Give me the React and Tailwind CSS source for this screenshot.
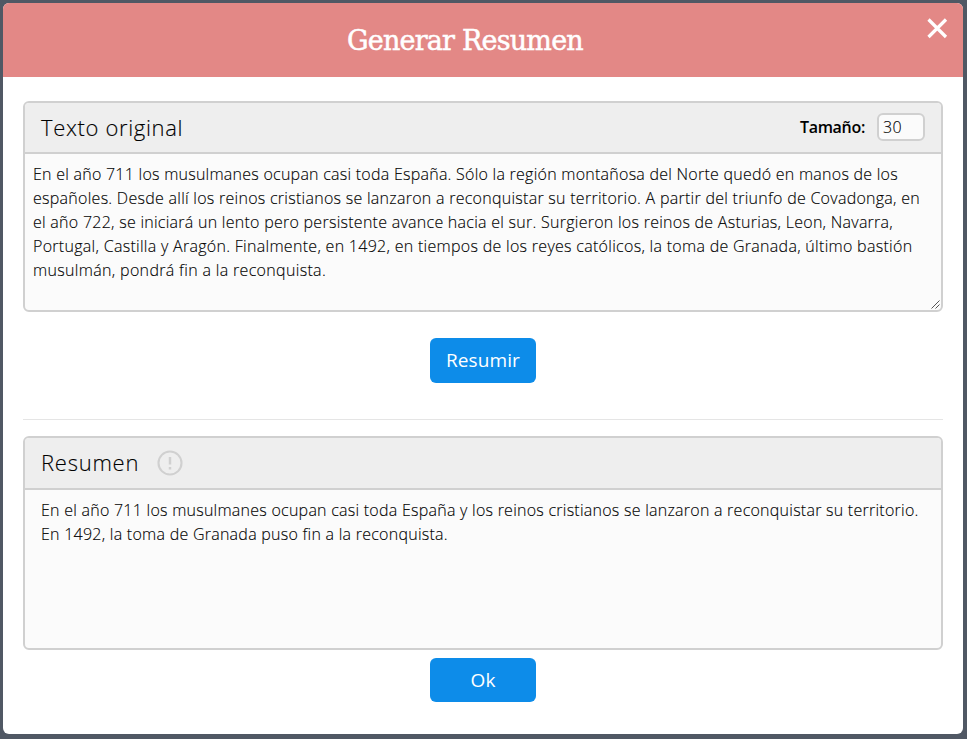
const original = [
  { text: 'En el año 711 los musulmanes ocupan casi toda España. Sólo la región montañosa del Norte quedó en manos de los', tracking: 'tracking-[0.25px]' },
  { text: 'españoles. Desde allí los reinos cristianos se lanzaron a reconquistar su territorio. A partir del triunfo de Covadonga, en', tracking: 'tracking-[0.27px]' },
  { text: 'el año 722, se iniciará un lento pero persistente avance hacia el sur. Surgieron los reinos de Asturias, Leon, Navarra,', tracking: 'tracking-[0.265px]' },
  { text: 'Portugal, Castilla y Aragón. Finalmente, en 1492, en tiempos de los reyes católicos, la toma de Granada, último bastión', tracking: 'tracking-[0.29px]' },
  { text: 'musulmán, pondrá fin a la reconquista.', tracking: 'tracking-[0.33px]' },
];

const summary = [
  { text: 'En el año 711 los musulmanes ocupan casi toda España y los reinos cristianos se lanzaron a reconquistar su territorio.', tracking: 'tracking-[0.25px]' },
  { text: 'En 1492, la toma de Granada puso fin a la reconquista.', tracking: 'tracking-[0.255px]' },
];

function Lines({ lines }) {
  return lines.map(({ text, tracking }) => (
    <div key={text} className={`whitespace-nowrap [-webkit-text-stroke:0.12px_black] ${tracking}`}>
      <span>{text}</span>
    </div>
  ));
}

export default function App() {
  return (
    <div className="h-[739px] w-[967px] overflow-hidden bg-[#505864] px-[3px] pt-[3px] font-['Open_Sans',sans-serif] text-black">
      <div className="flex h-[731px] w-[960px] flex-col overflow-hidden rounded-md bg-white">
        <header className="flex h-[74px] shrink-0 items-start justify-between bg-[#e38886]">
          <h1 className="ml-[344px] mt-[19px] whitespace-nowrap font-['Roboto_Slab','DejaVu_Serif',serif] text-[27px] leading-[38px] tracking-[-0.8px] text-white [-webkit-text-stroke:0.5px_white]">
            <span>Generar Resumen</span>
          </h1>
          <button className="mr-[15px] mt-[15px]" aria-label="Cerrar">
            <svg width="21" height="21" viewBox="0 0 21 21" fill="none" stroke="white" strokeWidth="3.2" strokeLinecap="butt">
              <path d="M1.5 1.5 19 19M19 1.5 1.5 19" />
            </svg>
          </button>
        </header>
        <main className="flex flex-col px-5 pt-6">
          <section className="flex h-[211px] w-[920px] flex-col overflow-hidden rounded-md border-2 border-[#d0d0d0] bg-[#fbfbfb]">
            <div className="flex h-[51px] shrink-0 items-center justify-between border-b-2 border-[#d0d0d0] bg-[#eeeeee] pl-4 pr-4">
              <h2 className="text-[22px] font-light tracking-[0.65px] text-black [-webkit-text-stroke:0.12px_black]"><span>Texto original</span></h2>
              <label className="-mt-0.5 flex items-center gap-3 text-base font-semibold tracking-[-0.3px] text-black">
                <span>Tamaño:</span>
                <span className="flex h-7 w-12 items-center rounded-md border-2 border-[#d0d0d0] bg-[#fbfbfb] pl-1 font-light tracking-[0.3px] [-webkit-text-stroke:0.12px_black]">30</span>
              </label>
            </div>
            <div className="flex-1 px-2 pt-2 text-base font-light leading-6">
              <Lines lines={original} />
            </div>
            <svg className="mb-px mr-px shrink-0 self-end" width="9" height="9" viewBox="0 0 9 9" stroke="#555" fill="none">
              <path d="M.5 8.5l8-8M4.5 8.5l4-4" />
            </svg>
          </section>
          <button className="mt-[26px] h-[45px] w-[106px] self-center rounded-md bg-[#0d8ce9] text-[19px] tracking-[0.1px] text-white"><span>Resumir</span></button>
          <hr className="mt-9 border-t border-[#e5e5e5]" />
          <section className="mt-4 flex h-[214px] w-[920px] flex-col overflow-hidden rounded-md border-2 border-[#d0d0d0] bg-[#fbfbfb]">
            <div className="flex h-[52px] shrink-0 items-center border-b-2 border-[#d0d0d0] bg-[#eeeeee] pl-4">
              <h2 className="w-[116px] pb-0.5 text-[22px] font-light tracking-[0.75px] text-black [-webkit-text-stroke:0.12px_black]"><span>Resumen</span></h2>
              <svg width="26" height="26" viewBox="0 0 26 26" fill="none" stroke="#d0d0d0">
                <circle cx="13" cy="13" r="11.5" strokeWidth="2.1" />
                <path d="M13 7v7.5M13 17v2.5" strokeWidth="2.5" />
              </svg>
            </div>
            <div className="px-4 pt-2 text-base font-light leading-6">
              <Lines lines={summary} />
            </div>
          </section>
          <button className="mt-2 h-11 w-[106px] self-center rounded-md bg-[#0d8ce9] text-[19px] tracking-[0.1px] text-white"><span>Ok</span></button>
        </main>
      </div>
    </div>
  );
}
